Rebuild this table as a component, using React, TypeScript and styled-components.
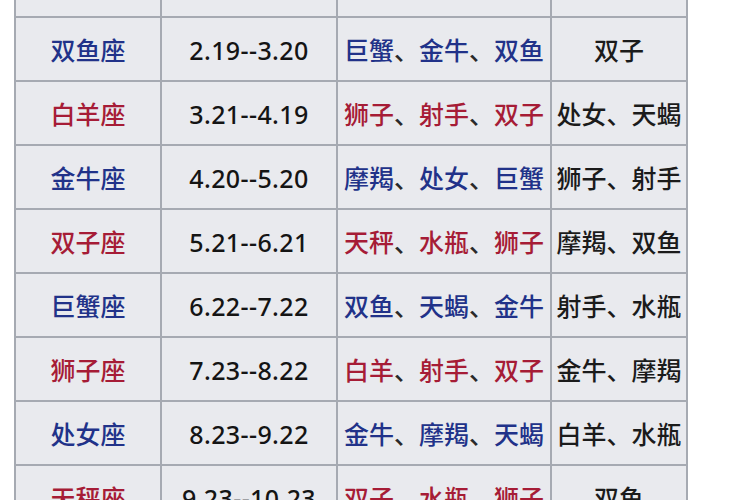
import React from "react";
import styled, {createGlobalStyle} from "styled-components";

const GlobalStyle = createGlobalStyle`
    html, body {
        margin: 0;
        padding: 0;
        background: #ffffff;
    }
    body {
        width: 750px;
        height: 500px;
        overflow: hidden;
        font-family: "Noto Sans CJK SC", "Noto Sans", sans-serif;
    }
`;

const Page = styled.div`
    width: 750px;
    height: 500px;
    overflow: hidden;
    padding-left: 14px;
    box-sizing: border-box;
`;

const Grid = styled.div`
    display: grid;
    grid-template-columns: 144px 174px 212px 134px;
    grid-template-rows: 16px;
    grid-auto-rows: 62px;
    gap: 2px;
    padding: 0 2px 2px 2px;
    width: max-content;
    background: #a6aab2;
`;

const Cell = styled.div`
    background: #e9eaee;
    display: flex;
    align-items: center;
    justify-content: center;
    font-size: 25px;
    font-weight: 500;
    color: #1b1b1b;
    white-space: nowrap;
`;

const DateText = styled.span`
    font-family: "Noto Sans", "Liberation Sans", sans-serif;
    font-size: 25px;
    font-weight: 500;
    letter-spacing: 0.4px;
    line-height: 1;
    padding-top: 2px;
    color: #141414;
`;

const Sign = styled.span<{$tone: "blue" | "red"}>`
    color: ${p => (p.$tone === "blue" ? "#213289" : "#a61c36")};
`;

const Sep = styled.span`
    color: #2a2a2a;
`;

type Row = {
    name: string;
    date: string;
    tone: "blue" | "red";
    best: string[];
    other: string[];
};

const rows: Row[] = [
    {name: "双鱼座", date: "2.19--3.20", tone: "blue", best: ["巨蟹", "金牛", "双鱼"], other: ["双子"]},
    {name: "白羊座", date: "3.21--4.19", tone: "red", best: ["狮子", "射手", "双子"], other: ["处女", "天蝎"]},
    {name: "金牛座", date: "4.20--5.20", tone: "blue", best: ["摩羯", "处女", "巨蟹"], other: ["狮子", "射手"]},
    {name: "双子座", date: "5.21--6.21", tone: "red", best: ["天秤", "水瓶", "狮子"], other: ["摩羯", "双鱼"]},
    {name: "巨蟹座", date: "6.22--7.22", tone: "blue", best: ["双鱼", "天蝎", "金牛"], other: ["射手", "水瓶"]},
    {name: "狮子座", date: "7.23--8.22", tone: "red", best: ["白羊", "射手", "双子"], other: ["金牛", "摩羯"]},
    {name: "处女座", date: "8.23--9.22", tone: "blue", best: ["金牛", "摩羯", "天蝎"], other: ["白羊", "水瓶"]},
    {name: "天秤座", date: "9.23--10.23", tone: "red", best: ["双子", "水瓶", "狮子"], other: ["双鱼"]},
];

export default function App() {
    return (
        <>
            <GlobalStyle/>
            <Page>
                <Grid>
                    {/* header row, mostly scrolled out of view */}
                    <Cell/>
                    <Cell/>
                    <Cell/>
                    <Cell/>
                    {rows.map((row) => (
                        <React.Fragment key={row.name}>
                            <Cell><Sign $tone={row.tone}>{row.name}</Sign></Cell>
                            <Cell><DateText>{row.date}</DateText></Cell>
                            <Cell>
                                {row.best.map((b, i) => (
                                    <React.Fragment key={b}>
                                        {i > 0 && <Sep>、</Sep>}
                                        <Sign $tone={row.tone}>{b}</Sign>
                                    </React.Fragment>
                                ))}
                            </Cell>
                            <Cell>{row.other.join("、")}</Cell>
                        </React.Fragment>
                    ))}
                </Grid>
            </Page>
        </>
    );
}
